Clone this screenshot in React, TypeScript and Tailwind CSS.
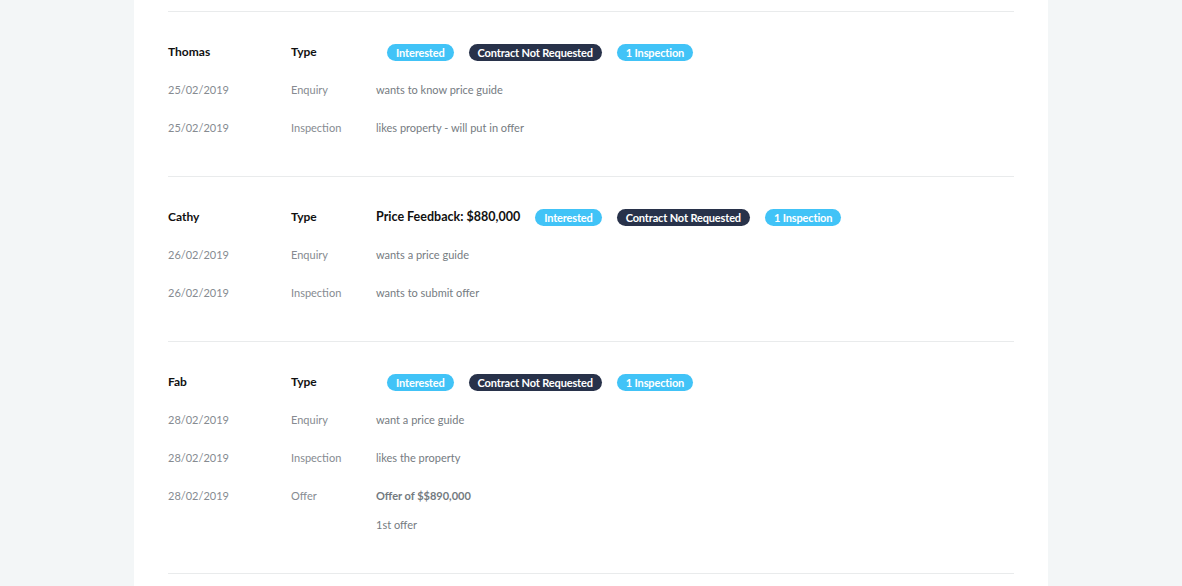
import React from "react";

type Row = { date: string; type: string; desc: string; sub?: string; bold?: boolean };
type Section = { name: string; price?: string; rows: Row[] };

const sections: Section[] = [
  {
    name: "Thomas",
    rows: [
      { date: "25/02/2019", type: "Enquiry", desc: "wants to know price guide" },
      { date: "25/02/2019", type: "Inspection", desc: "likes property - will put in offer" },
    ],
  },
  {
    name: "Cathy",
    price: "Price Feedback: $880,000",
    rows: [
      { date: "26/02/2019", type: "Enquiry", desc: "wants a price guide" },
      { date: "26/02/2019", type: "Inspection", desc: "wants to submit offer" },
    ],
  },
  {
    name: "Fab",
    rows: [
      { date: "28/02/2019", type: "Enquiry", desc: "want a price guide" },
      { date: "28/02/2019", type: "Inspection", desc: "likes the property" },
      { date: "28/02/2019", type: "Offer", desc: "Offer of $$890,000", sub: "1st offer", bold: true },
    ],
  },
];

function Badge({ dark, children }: { dark?: boolean; children: React.ReactNode }) {
  return (
    <span
      className={`inline-flex h-[17px] items-center rounded-full px-[9px] text-[11px] font-bold leading-none tracking-[-0.15px] text-white ${
        dark ? "bg-[#28324a]" : "bg-[#41c3f7]"
      }`}
    >
      {children}
    </span>
  );
}

export default function App() {
  return (
    <div
      className="flex min-h-[586px] w-full justify-center bg-[#f3f6f7]"
      style={{ fontFamily: "Lato, 'Noto Sans', sans-serif" }}
    >
      <div className="w-[914px] bg-white px-[34px] pt-[11px]">
        {sections.map((s) => (
          <div key={s.name} className="border-t border-[#e9ebec] pb-[29px] pt-[21px]">
            <div className="flex h-[38px] items-center text-[12px] font-bold text-[#111]">
              <div className="w-[123px]">{s.name}</div>
              <div className="w-[85px]">Type</div>
              <div className={`flex items-center gap-[15px] ${s.price ? "" : "pl-[11px]"}`}>
                {s.price && <span className="text-[12.5px]">{s.price}</span>}
                <Badge>Interested</Badge>
                <Badge dark>Contract Not Requested</Badge>
                <Badge>1 Inspection</Badge>
              </div>
            </div>
            {s.rows.map((r, i) => (
              <div key={i} className="flex py-[10px] text-[11px] leading-[18px] text-[#868b91]">
                <div className="w-[123px]">{r.date}</div>
                <div className="w-[85px]">{r.type}</div>
                <div className="flex flex-col">
                  <span className={r.bold ? "font-bold text-[#737a80]" : "text-[#757b81]"}>{r.desc}</span>
                  {r.sub && <span className="mt-[11px] text-[#757b81]">{r.sub}</span>}
                </div>
              </div>
            ))}
          </div>
        ))}
        <div className="border-t border-[#e9ebec] h-[20px]" />
      </div>
    </div>
  );
}
